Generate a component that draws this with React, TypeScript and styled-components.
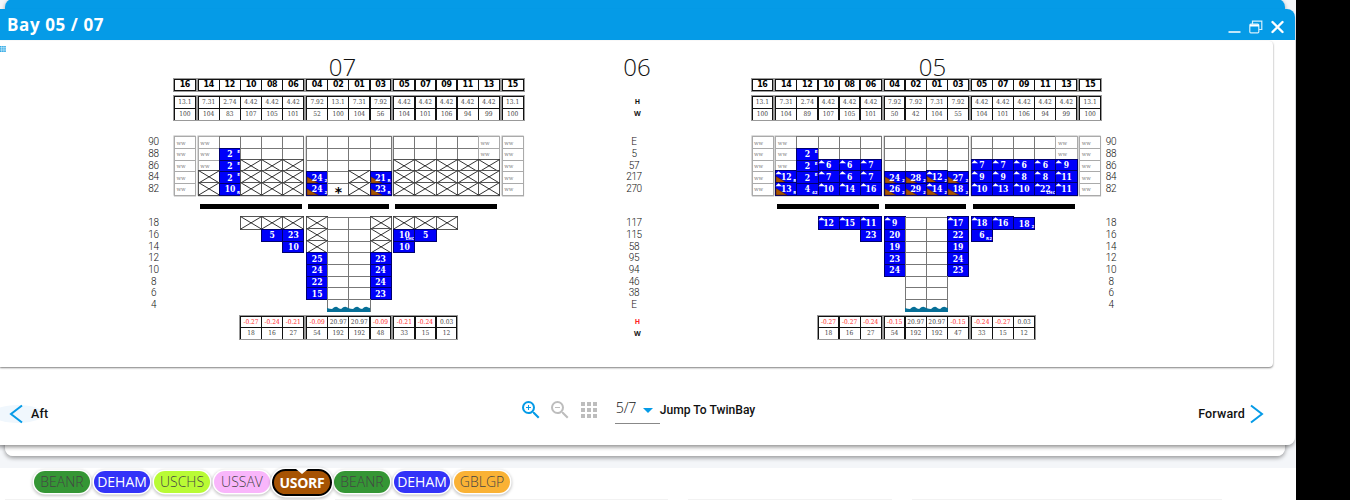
import React from "react";
import styled, { createGlobalStyle, css } from "styled-components";
import { MdApps, MdZoomIn, MdZoomOut } from "react-icons/md";

const COL = 21.15;
const ROW = 11.7;
const GAP = 2.65;
const SERIF = `"DejaVu Serif Condensed", "DejaVu Serif", serif`;
const LIGHT = `"Open Sans", "Noto Sans", sans-serif`;

const Global = createGlobalStyle`
  * { box-sizing: border-box; }
  body { margin: 0; background: #000; overflow: hidden; }
`;

const Page = styled.div`
  position: relative;
  width: 1296px;
  height: 500px;
  overflow: hidden;
  background: #fff;
  font-family: ${LIGHT};
`;

const Backdrop = styled.div`
  height: 468px;
  background: #f4f6f9;
`;

const BackWindow = styled.div`
  position: absolute;
  top: -1px;
  left: 5px;
  width: 1280px;
  height: 457px;
  border-radius: 8px;
  background: linear-gradient(#059be7 40px, #fff 40px);
  box-shadow: 0 2px 4px rgba(0, 0, 0, 0.38);
`;

const Window = styled.section`
  position: absolute;
  top: 9px;
  left: -8px;
  width: 1303px;
  height: 436px;
  padding-left: 8px;
  display: flex;
  flex-direction: column;
  border-radius: 8px;
  overflow: hidden;
  background: #fff;
`;

const WindowShadow = styled.div`
  position: absolute;
  top: 9px;
  left: -8px;
  width: 1303px;
  height: 436px;
  border-radius: 8px;
  box-shadow: 0 3px 4px -1px rgba(0, 0, 0, 0.45);
`;

const TitleBar = styled.header`
  flex: none;
  height: 31px;
  margin-left: -8px;
  padding: 1px 11.5px 0 15px;
  display: flex;
  justify-content: space-between;
  align-items: center;
  background: #059be7;
  color: #fff;
`;

const Title = styled.h1`
  margin: 0;
  font: 700 17px/30px ${LIGHT};
  letter-spacing: 0.6px;
`;

const Controls = styled.div`
  display: flex;
  align-items: center;
  gap: 8px;
  padding-top: 4px;
`;

const Panel = styled.main`
  flex: none;
  position: relative;
  width: 1272.5px;
  height: 326px;
  margin-top: 1px;
  padding: 14px 0 0 146px;
  display: flex;
  align-items: flex-start;
  border-radius: 0 4px 4px 0;
  box-shadow: 0 1px 2px rgba(0, 0, 0, 0.5);
`;

const Grip = styled.svg`
  position: absolute;
  left: 0;
  top: 5px;
`;

const LabelColumn = styled.div<{ $w: number; $top?: number }>`
  width: ${(p) => p.$w}px;
  padding-top: ${(p) => p.$top ?? 81.4}px;
  display: flex;
  flex-direction: column;
  align-items: center;
`;

const Label = styled.span`
  height: ${ROW}px;
  font: 300 10px/11.7px Roboto, sans-serif;
  letter-spacing: -0.35px;
  color: #111;
`;

const Spacer = styled.div<{ $h?: number; $w?: number }>`
  width: ${(p) => p.$w ?? 1}px;
  height: ${(p) => p.$h ?? 1}px;
  flex: none;
`;

const Totals = styled.b<{ $red?: boolean }>`
  height: 12px;
  margin-left: 7px;
  font: 700 7px/12px "Noto Sans", sans-serif;
  color: ${(p) => (p.$red ? "#f22" : "#111")};
`;

const BayTitle = styled.h2<{ $shift: number }>`
  height: 23px;
  margin: 0 0 0 ${(p) => p.$shift}px;
  text-align: center;
  font: 300 24px/23px ${LIGHT};
  color: #111;
`;

const BayBox = styled.div`
  width: 349px;
  display: flex;
  flex-direction: column;
`;

const Section = styled.div<{ $top: number }>`
  display: flex;
  gap: ${GAP}px;
  margin-top: ${(p) => p.$top}px;
`;

const Group = styled.div<{ $n: number; $row?: number; $ring?: boolean }>`
  display: grid;
  grid-template-columns: repeat(${(p) => p.$n}, ${COL}px);
  grid-auto-rows: ${(p) => p.$row ?? ROW}px;
  ${(p) => p.$ring && css`box-shadow: 0 0 0 0.6px #c4c4c4, 0.5px 1px 0 0.6px #c4c4c4;`}
`;

const Cell = styled.div<{ $kind: string; $tall?: boolean }>`
  position: relative;
  width: ${COL + 1}px;
  height: ${ROW + 1}px;
  display: flex;
  align-items: center;
  justify-content: center;
  border: 1px solid #777;
  background: #fff;
  font: 700 8.5px/10px ${SERIF};
  color: #fff;
  ${(p) => p.$kind === "none" && css`visibility: hidden;`}
  ${(p) => p.$kind === "blue" && css`background: #0000fa; border-color: #00006e;`}
  ${(p) => p.$kind === "cross" && css`border-color: #555;`}
  ${(p) => p.$kind === "ww" && css`
    justify-content: flex-start;
    padding-left: 1.5px;
    border-color: #aaa;
    font: 400 6px/10px ${SERIF};
    color: #888;
  `}
  ${(p) => p.$kind === "star" && css`color: #000; font: 700 14px/10px "DejaVu Sans", sans-serif; padding-top: 6px;`}
  ${(p) => p.$tall && css`margin-top: -1px; height: ${ROW + 2}px;`}
`;

const Value = styled.span`
  position: relative;
`;

const Mark = styled.small<{ $up?: boolean }>`
  position: absolute;
  right: 0;
  ${(p) => (p.$up ? "top: 0;" : "bottom: -0.5px;")}
  font: 700 4px/5px "DejaVu Sans", sans-serif;
`;

const Overlay = styled.svg`
  position: absolute;
  inset: -1px;
  width: calc(100% + 2px);
  height: calc(100% + 2px);
`;

const HeadCell = styled.div`
  width: ${COL + 0.6}px;
  height: 12px;
  border: 1px solid #111;
  background: #fff;
  text-align: center;
  font: 700 8.8px/9px "DejaVu Sans Condensed", "DejaVu Sans", sans-serif;
  letter-spacing: -0.3px;
  color: #000;
`;

const DataCell = styled.div<{ $red?: boolean }>`
  width: ${COL + 0.6}px;
  height: 12.5px;
  border: 1px solid #111;
  background: #fff;
  text-align: center;
  white-space: nowrap;
  font: 400 6.6px/11px ${SERIF};
  color: ${(p) => (p.$red ? "#ff2a2a" : "#444")};
`;

const TableFrame = styled(Group)`
  outline: 1px solid #999;
  outline-offset: -0.6px;
  width: ${(p) => p.$n * COL + 0.6}px;
  margin-right: -0.6px;
`;

const HatchBar = styled.div`
  height: 5px;
  background: #000;
`;

const HatchSlot = styled.div<{ $n: number }>`
  width: ${(p) => p.$n * COL}px;
  padding: 0 1.8px;
`;

const Wave = styled.svg`
  position: absolute;
  left: -1px;
  bottom: -1px;
  width: ${COL + 1}px;
  height: 6px;
`;

/* Cell notation: "-" nothing, "_" free slot, "w" ww, "x" blocked, "*" marker,
   "~" free slot with water; otherwise weight plus flags:
   b brown corner, t white peak, ^E upper mark, /text lower mark. */
const parse = (code: string) => {
  const m = /^(\d+)(b?)(t?)(?:\^(\w+))?(?:\/(\w+))?$/.exec(code)!;
  return { value: m[1], brown: !!m[2], peak: !!m[3], up: m[4], low: m[5] };
};

function Slot({ code }: { code: string }) {
  if (code === "-") return <Cell $kind="none" />;
  if (code === "_") return <Cell $kind="free" />;
  if (code === "w") return <Cell $kind="ww">ww</Cell>;
  if (code === "*") return <Cell $kind="star">*</Cell>;
  if (code === "~")
    return (
      <Cell $kind="free">
        <Wave viewBox="0 0 22 6" preserveAspectRatio="none">
          <path d="M0 6V2q3 1 5 1 3-3 5-2 2 2 4 2 3-3 5-2 2 1 3 1v4z" fill="#066f97" />
        </Wave>
      </Cell>
    );
  if (code === "x")
    return (
      <Cell $kind="cross" $tall>
        <Overlay viewBox="0 0 22 13" preserveAspectRatio="none">
          <path d="M.5 .5 21.5 12.5M21.5 .5 .5 12.5" stroke="#222" strokeWidth=".9" />
        </Overlay>
      </Cell>
    );
  const c = parse(code);
  return (
    <Cell $kind="blue" $tall={c.peak}>
      <Overlay viewBox="0 0 22 13" preserveAspectRatio="none">
        {c.brown && <path d="M1 6 12 12.4H1z" fill="#a85400" stroke="#3a1c20" strokeWidth=".5" />}
        {c.peak && <path d="M.5 4 3.4 1.2 7 4z" fill="#fff" />}
      </Overlay>
      <Value>{c.value}</Value>
      {c.up && <Mark $up>{c.up}</Mark>}
      {c.low && <Mark>{c.low}</Mark>}
    </Cell>
  );
}

const SIZES = [1, 5, 4, 5, 1];
const HEAD = "16|14 12 10 08 06|04 02 01 03|05 07 09 11 13|15";
const groups = (rows: string[]) =>
  SIZES.map((_, g) => rows.flatMap((r) => r.split("|")[g].trim().split(" ")));

interface BayData {
  name: string;
  shift: number;
  top: string[];
  deck: string[];
  hold: string[];
  bottom: string[];
}

const bay07: BayData = {
  name: "07",
  shift: -12,
  top: [
    "13.1|7.31 2.74 4.42 4.42 4.42|7.92 13.1 7.31 7.92|4.42 4.42 4.42 4.42 4.42|13.1",
    "100|104 83 107 105 101|52 100 104 56|104 101 106 94 99|100",
  ],
  deck: [
    "w|w _ _ _ _|_ _ _ _|_ _ _ _ w|w",
    "w|w 2^E _ _ _|_ _ _ _|_ _ _ _ w|w",
    "w|w 2^E x x x|_ _ _ _|x x x x x|w",
    "w|x 2^E x x x|24b/2 _ x 21b/R|x x x x x|w",
    "w|x 10/R x x x|24b/2 * x 23b/R|x x x x x|w",
  ],
  hold: [
    "-|- - x x x|x _ _ x|x x x - -|-",
    "-|- - - 5 23|x _ _ x|10/LHC 5 - - -|-",
    "-|- - - - 10|x _ _ x|10 - - - -|-",
    "-|- - - - -|25 _ _ 23|- - - - -|-",
    "-|- - - - -|24 _ _ 24|- - - - -|-",
    "-|- - - - -|22 _ _ 24|- - - - -|-",
    "-|- - - - -|15 _ _ 23|- - - - -|-",
    "-|- - - - -|- ~ ~ -|- - - - -|-",
  ],
  bottom: [
    "-0.27 -0.24 -0.21|-0.09 20.97 20.97 -0.09|-0.21 -0.24 0.03",
    "18 16 27|54 192 192 48|33 15 12",
  ],
};

const bay05: BayData = {
  name: "05",
  shift: 13,
  top: [
    "13.1|7.31 2.74 4.42 4.42 4.42|7.92 7.92 7.31 7.92|4.42 4.42 4.42 4.42 4.42|13.1",
    "100|104 89 107 105 101|50 42 104 55|104 101 106 94 99|100",
  ],
  deck: [
    "w|w _ _ _ _|_ _ _ _|_ _ _ _ w|w",
    "w|w 2^E _ _ _|_ _ _ _|_ _ _ _ w|w",
    "w|w 2^E 6t 6t 7t|_ _ _ _|7t 7t 6t 6t 9t|w",
    "w|12bt/R 2^E 7t 6t 7t|24b/2 28b/2 12bt/2 27b/2|9t 9t 8t 8t 11t|w",
    "w|13bt/R 4/42 10t 14t 16t|26b/2 29b/2 14bt/2 18b/2|10t 13t 10t 22t/LHC 11t|w",
  ],
  hold: [
    "-|- - 12t 15t 11t|9t _ _ 17t|18t 16t 18/2 - -|-",
    "-|- - - - 23|20 _ _ 22|6/R2 - - - -|-",
    "-|- - - - -|19 _ _ 19|- - - - -|-",
    "-|- - - - -|23 _ _ 24|- - - - -|-",
    "-|- - - - -|24 _ _ 23|- - - - -|-",
    "-|- - - - -|- _ _ -|- - - - -|-",
    "-|- - - - -|- _ _ -|- - - - -|-",
    "-|- - - - -|- ~ ~ -|- - - - -|-",
  ],
  bottom: [
    "-0.27 -0.27 -0.24|-0.15 20.97 20.97 -0.15|-0.24 -0.27 0.03",
    "18 16 27|54 192 192 47|33 15 12",
  ],
};

const BottomTable = styled(Section)`
  justify-content: center;
`;

function Bay({ data }: { data: BayData }) {
  return (
    <BayBox>
      <BayTitle $shift={data.shift}>{data.name}</BayTitle>
      <Section $top={1}>
        {groups([HEAD]).map((cells, g) => (
          <TableFrame key={g} $n={SIZES[g]} $row={12}>
            {cells.map((c) => <HeadCell key={c}>{c}</HeadCell>)}
          </TableFrame>
        ))}
      </Section>
      <Section $top={5.4}>
        {groups(data.top).map((cells, g) => (
          <TableFrame key={g} $n={SIZES[g]} $row={11.8}>
            {cells.map((c, i) => <DataCell key={i}>{c}</DataCell>)}
          </TableFrame>
        ))}
      </Section>
      <Section $top={16.2}>
        {groups(data.deck).map((cells, g) => (
          <Group key={g} $n={SIZES[g]} $ring>
            {cells.map((c, i) => <Slot key={i} code={c} />)}
          </Group>
        ))}
      </Section>
      <Section $top={9}>
        {SIZES.map((n, g) => (
          <HatchSlot key={g} $n={n}>{n > 1 && <HatchBar />}</HatchSlot>
        ))}
      </Section>
      <Section $top={8.6}>
        {groups(data.hold).map((cells, g) => (
          <Group key={g} $n={SIZES[g]}>
            {cells.map((c, i) => <Slot key={i} code={c} />)}
          </Group>
        ))}
      </Section>
      <BottomTable $top={4.9}>
        {[3, 4, 3].map((n, g) => (
          <TableFrame key={g} $n={n} $row={11.8}>
            {data.bottom.flatMap((r) => r.split("|")[g].split(" ")).map((c, i) => (
              <DataCell key={i} $red={c.startsWith("-")}>{c}</DataCell>
            ))}
          </TableFrame>
        ))}
      </BottomTable>
    </BayBox>
  );
}

const DECK_TIERS = ["90", "88", "86", "84", "82"];
const HOLD_TIERS = ["18", "16", "14", "12", "10", "8", "6", "4"];

function Tiers({ width }: { width: number }) {
  return (
    <LabelColumn $w={width}>
      {DECK_TIERS.map((t) => <Label key={t}>{t}</Label>)}
      <Spacer $h={22.5} />
      {HOLD_TIERS.map((t) => <Label key={t}>{t}</Label>)}
    </LabelColumn>
  );
}

const Footer = styled.footer`
  flex: 1;
  display: flex;
  justify-content: space-between;
  padding: 30px 31px 0 9px;
  font: 500 12.5px/14px Roboto, sans-serif;
  color: #111;
`;

const NavButton = styled.div`
  position: relative;
  z-index: 0;
  display: flex;
  align-items: center;
  gap: 7px;
  height: 34px;
  letter-spacing: 0.15px;
  &:first-child::before {
    content: "";
    position: absolute;
    left: -17px;
    top: 8px;
    width: 52px;
    height: 18px;
    border-radius: 50%;
    background: #f0f7fd;
    z-index: -1;
  }
  &:last-child { gap: 5px; }
`;

const Tools = styled.div`
  display: flex;
  align-items: flex-start;
  width: 238px;
  margin-left: 29px;
  & > svg { margin: 1px 5px 0 0; flex: none; }
`;

const Picker = styled.div`
  flex: none;
  width: 45px;
  height: 27px;
  margin: 0 0 0 9px;
  padding: 0 7px 0 1px;
  display: flex;
  align-items: center;
  justify-content: space-between;
  border-bottom: 1px solid #888;
  font: 300 14.3px/22px ${LIGHT};
  & > span { margin-top: -4px; letter-spacing: -0.3px; }
`;

const Caret = styled.i`
  border: 5px solid transparent;
  border-top-color: #059be7;
  border-bottom: 0;
`;

const Jump = styled.span`
  margin-top: 6px;
  white-space: nowrap;
  font: 500 12.1px/14px Roboto, sans-serif;
`;

const Ports = styled.nav`
  position: relative;
  display: flex;
  gap: 4px;
  padding: 2.5px 0 0 34px;
  height: 31px;
`;

const Port = styled.span<{ $bg: string; $fg?: string; $w?: number }>`
  width: 56px;
  height: 22px;
  border-radius: 11px;
  background: ${(p) => p.$bg};
  box-shadow: 0 0 0 1.5px #fff, 0 1px 3px 2px rgba(0, 0, 0, 0.22);
  color: ${(p) => p.$fg ?? "#444"};
  text-align: center;
  font: ${(p) => p.$w ?? 300} 14px/21px ${LIGHT};
`;

const ActivePort = styled(Port)`
  position: relative;
  width: 60px;
  height: 27px;
  margin: -2px -2px 0;
  border: 2px solid #000;
  border-radius: 14px;
  line-height: 23px;
  letter-spacing: -0.3px;
  &::before {
    content: "";
    position: absolute;
    left: 22px;
    top: -2px;
    border: 6px solid transparent;
    border-top: 5px solid #fff;
    border-bottom: 0;
  }
`;

const Stubs = styled.div`
  display: flex;
  gap: 20px;
  padding-left: 5px;
  & > i { height: 1px; background: #f2f2f2; }
  & > i:nth-child(1) { width: 310px; }
  & > i:nth-child(2) { width: 333px; }
  & > i:nth-child(3) { width: 204px; }
  & > i:nth-child(4) { width: 310px; }
`;

export default function App() {
  return (
    <>
      <Global />
      <Page>
        <Backdrop />
        <BackWindow />
        <WindowShadow />
        <Window>
          <TitleBar>
            <Title>Bay 05 / 07</Title>
            <Controls>
              <svg width="13" height="14"><path d="M.5 12h12" stroke="#fff" strokeWidth="1.5" /></svg>
              <svg width="14" height="14" fill="none" stroke="#d5effc" strokeWidth="1.2">
                <path d="M3.5 4V1.2h9.3v8.3H10" /><rect x=".8" y="4.2" width="9" height="8.6" rx="1" /><path d="M1 5.5h9" strokeWidth="2" stroke="#fff" />
              </svg>
              <svg width="13" height="14"><path d="M1.5 2l10 10M11.5 2l-10 10" stroke="#fff" strokeWidth="2.4" strokeLinecap="round" /></svg>
            </Controls>
          </TitleBar>
          <Panel>
            <Grip width="6" height="6">
              <path d="M.8 0v6M2.9 0v6M5 0v6" stroke="#8bd2f4" strokeWidth="1.4" />
              <path d="M.8 0v6M2.9 0v6M5 0v6" stroke="#1c9fe0" strokeWidth="1.2" strokeDasharray="1.3 1" />
            </Grip>
            <Tiers width={15} />
            <Spacer $w={13} />
            <Bay data={bay07} />
            <Spacer $w={99} />
            <LabelColumn $w={24} $top={0}>
              <BayTitle $shift={6}>06</BayTitle>
              <Spacer $h={18} />
              <Totals>H</Totals>
              <Totals>W</Totals>
              <Spacer $h={16.4} />
              {["E", "5", "57", "217", "270"].map((t) => <Label key={t}>{t}</Label>)}
              <Spacer $h={22.5} />
              {["117", "115", "58", "95", "94", "46", "38", "E"].map((t, i) => <Label key={i}>{t}</Label>)}
              <Spacer $h={5.5} />
              <Totals $red>H</Totals>
              <Totals>W</Totals>
            </LabelColumn>
            <Spacer $w={105.5} />
            <Bay data={bay05} />
            <Spacer $w={3} />
            <Tiers width={15} />
          </Panel>
          <Footer>
            <NavButton>
              <svg width="15" height="20"><path d="M13 1.5 2 10l11 8.5" fill="none" stroke="#059be7" strokeWidth="2" /></svg>
              Aft
            </NavButton>
            <Tools>
              <MdZoomIn size={24} color="#059be7" />
              <MdZoomOut size={24} color="#bdbdbd" />
              <MdApps size={24} color="#bdbdbd" />
              <Picker><span>5/7</span><Caret /></Picker>
              <Jump>Jump To TwinBay</Jump>
            </Tools>
            <NavButton>
              Forward
              <svg width="14" height="20"><path d="M1 1.5 12 10 1 18.5" fill="none" stroke="#059be7" strokeWidth="2" /></svg>
            </NavButton>
          </Footer>
        </Window>
        <Ports>
          <Port $bg="#359635">BEANR</Port>
          <Port $bg="#3333f8" $fg="#fff" $w={500}>DEHAM</Port>
          <Port $bg="#b9fb35">USCHS</Port>
          <Port $bg="#f9b6fb">USSAV</Port>
          <ActivePort $bg="#a65303" $fg="#fff" $w={700}>USORF</ActivePort>
          <Port $bg="#359635">BEANR</Port>
          <Port $bg="#3333f8" $fg="#fff" $w={500}>DEHAM</Port>
          <Port $bg="#fab235">GBLGP</Port>
        </Ports>
        <Stubs><i /><i /><i /><i /></Stubs>
      </Page>
    </>
  );
}
